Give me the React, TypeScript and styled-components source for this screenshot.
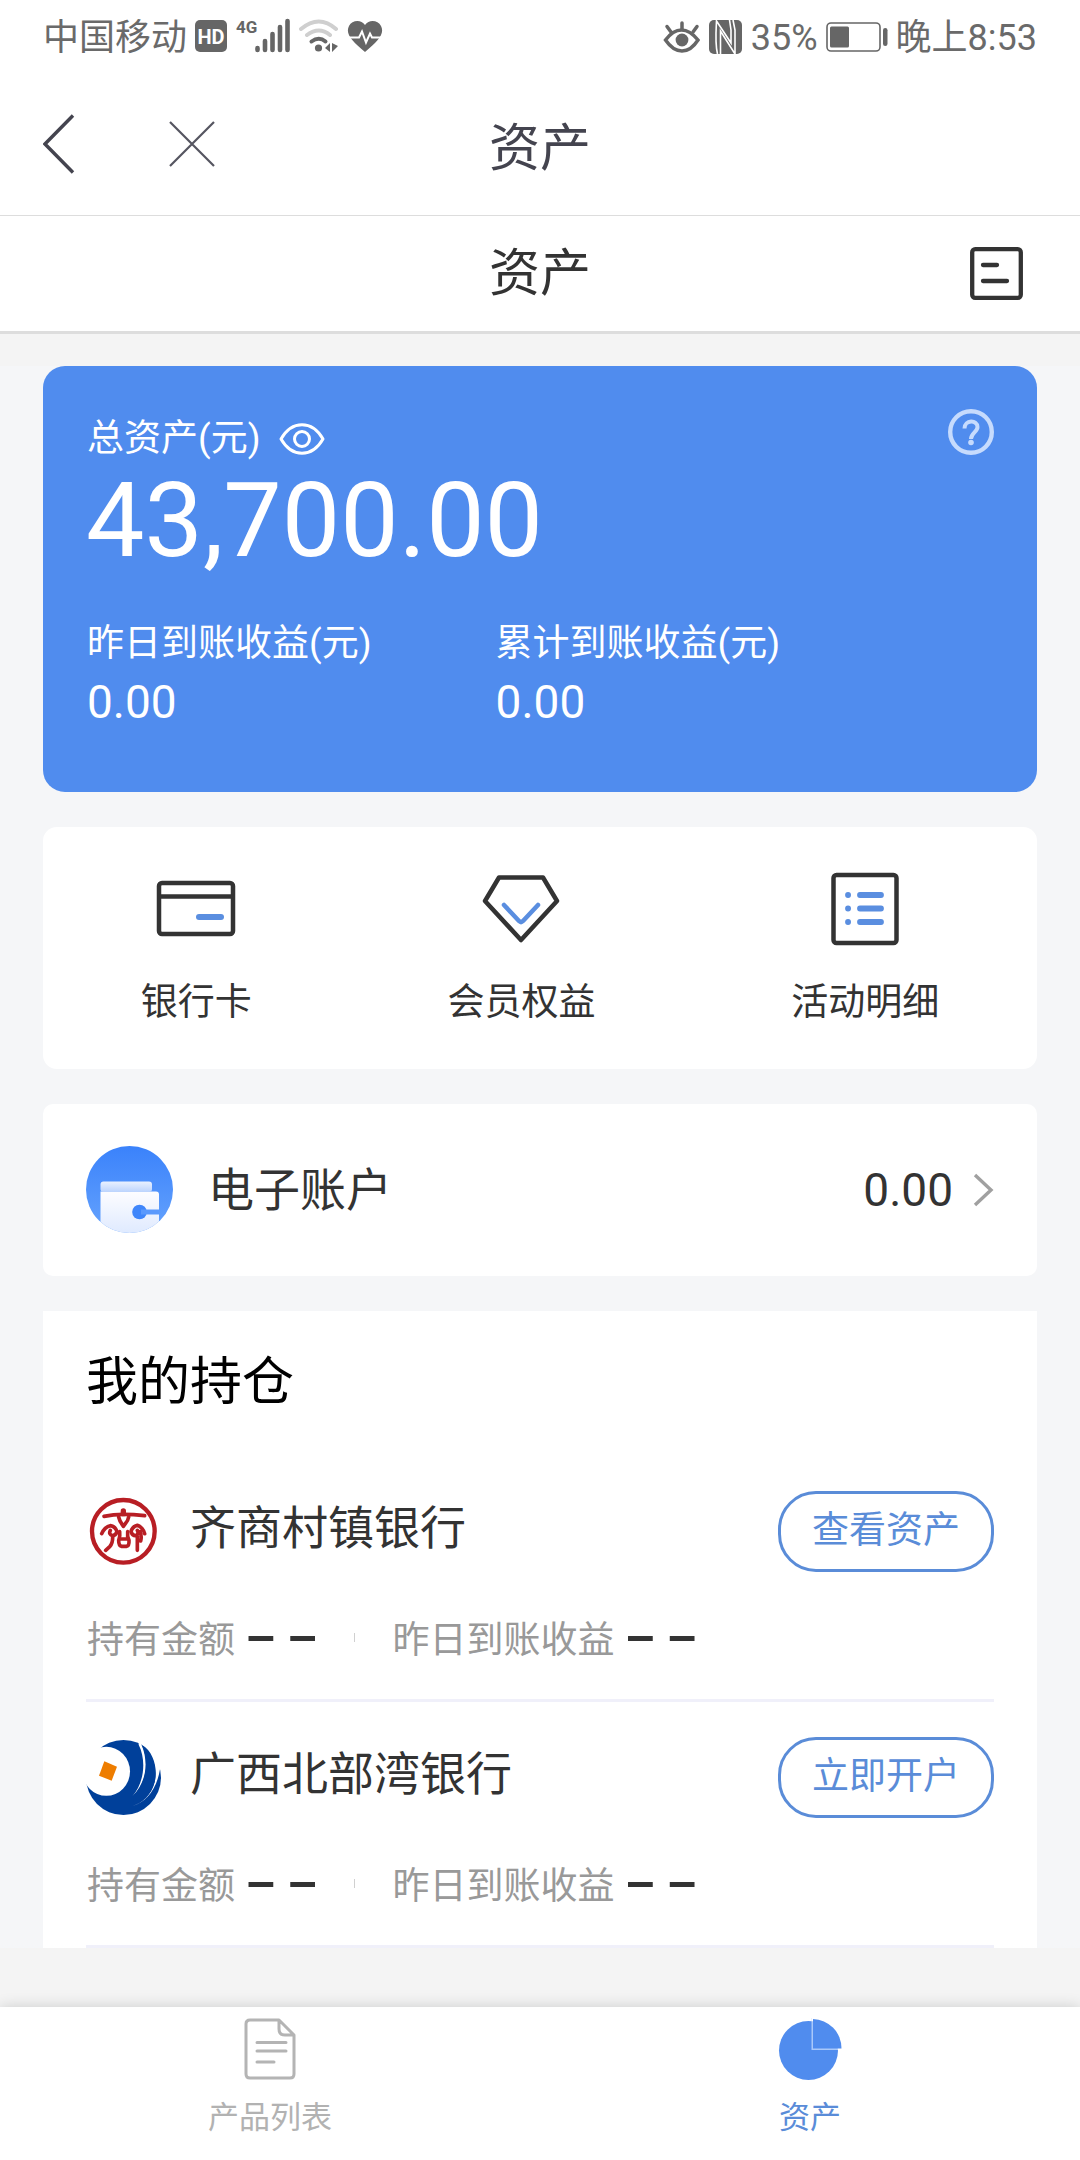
import React from "react";
import styled, { createGlobalStyle } from "styled-components";

const BLUE = "#508cee";
const LINK = "#5a8cd8";
const INK = "#333333";
const LATIN_FIRST = `Roboto, "Noto Sans CJK SC", sans-serif`;
const HAN_FIRST = `"Noto Sans CJK SC", Roboto, sans-serif`;

const GlobalStyle = createGlobalStyle`
  *, *::before, *::after { box-sizing: border-box; }
  body { margin: 0; background: #f4f4f4; }
  h1, h2, h3, p, dl, dd, ul { margin: 0; padding: 0; font-weight: 400; }
  ul { list-style: none; }
  button { padding: 0; border: 0; background: none; font: inherit; color: inherit; cursor: pointer; }
  svg { display: block; flex: none; }
`;

const Page = styled.div`
  display: flex;
  flex-direction: column;
  min-height: 100vh;
  background: #f4f4f4;
  color: ${INK};
  font-family: ${LATIN_FIRST};
  font-size: 37px;
  line-height: 54px;
`;

const StatusBar = styled.div`
  display: flex;
  align-items: center;
  justify-content: space-between;
  min-height: 72px;
  padding: 3px 43px 0;
  background: #fff;
  color: #6a6a6a;
  font-size: 36px;
`;

const StatusGroup = styled.div`
  display: flex;
  align-items: center;
  gap: 8px;
`;

const NavBar = styled.header`
  display: grid;
  grid-template-columns: 1fr auto 1fr;
  align-items: center;
  min-height: 144px;
  padding: 0 43px;
  border-bottom: 1px solid #dddddd;
  background: #fff;
`;

const NavActions = styled.div`
  display: flex;
  align-items: center;
  gap: 94px;
`;

const NavTitle = styled.h1`
  color: #44444f;
  font-family: ${HAN_FIRST};
  font-size: 51px;
  line-height: 72px;
`;

const TitleBar = styled(NavBar)`
  min-height: 118px;
  padding: 0 57px;
  border-bottom: 3px solid #dddddd;
`;

const PageTitle = styled.h2`
  grid-column: 2;
  font-size: 51px;
  line-height: 72px;
`;

const TitleAction = styled.button`
  justify-self: end;
`;

const Content = styled.main`
  display: flex;
  flex-direction: column;
  gap: 35px;
  margin: 32px 0 59px;
  padding: 0 43px;
  background: #f5f6f8;
`;

const AssetCard = styled.section`
  padding: 43px 43px 58px;
  border-radius: 22px;
  background: ${BLUE};
  color: #fff;
`;

const AssetHeader = styled.div`
  display: flex;
  align-items: flex-start;
  justify-content: space-between;
`;

const AssetLabel = styled.div`
  display: flex;
  align-items: center;
  gap: 18px;
  padding: 3px 0 0 1px;
`;

const Total = styled.p`
  font-size: 104px;
  line-height: 110px;
`;

const Earnings = styled.dl`
  display: grid;
  grid-template-columns: 9fr 11fr;
  margin-top: 41px;
`;

const EarningLabel = styled.dt`
  padding-left: 1px;
`;

const EarningValue = styled.dd`
  padding-left: 1px;
  font-size: 46px;
  line-height: 63px;
`;

const Shortcuts = styled.nav`
  display: flex;
  justify-content: space-around;
  padding: 42px 0 39px;
  border-radius: 14px;
  background: #fff;
`;

const Shortcut = styled.button`
  display: flex;
  flex-direction: column;
  align-items: center;
  gap: 27px;
`;

const AccountCard = styled.button`
  display: flex;
  align-items: center;
  padding: 42px 43px 43px;
  border-radius: 10px;
  background: #fff;
  text-align: left;
`;

const AccountName = styled.span`
  flex: 1;
  margin-left: 35px;
  font-size: 46px;
`;

const AccountValue = styled.span`
  margin-right: 20px;
  font-size: 46px;
`;

const Holdings = styled.section`
  padding: 37px 43px 0;
  background: #fff;
`;

const HoldingsTitle = styled.h2`
  margin-bottom: 38px;
  color: #000;
  font-size: 52px;
  line-height: 70px;
`;

const Holding = styled.li`
  padding: 35px 0 31px;
  border-bottom: 3px solid #f0f0fa;
`;

const HoldingHeader = styled.div`
  display: flex;
  align-items: center;
`;

const BankName = styled.h3`
  flex: 1;
  margin-left: 29px;
  padding-bottom: 8px;
  font-size: 46px;
  line-height: 64px;
`;

const PillButton = styled.button`
  padding: 10px 31px 11px;
  border: 3px solid ${LINK};
  border-radius: 38px;
  color: ${LINK};
  min-width: 216px;
`;

const Stats = styled.dl`
  display: flex;
  align-items: center;
  margin-top: 42px;
`;

const Stat = styled.div`
  display: flex;
  align-items: center;
  gap: 12px;
`;

const StatLabel = styled.dt`
  padding-left: 1px;
  color: #999;
`;

const StatValue = styled.dd`
  padding-bottom: 12px;
  font-family: "Liberation Sans", Arial, sans-serif;
  font-size: 50px;
  font-weight: 700;
  line-height: 42px;
`;

const StatRule = styled.span`
  width: 1px;
  height: 9px;
  margin: 0 37px 8px;
  background: #d0d0d0;
`;

const TabBar = styled.nav`
  display: grid;
  grid-template-columns: 1fr 1fr;
  margin-top: auto;
  background: #fff;
  box-shadow: 0 0 14px rgba(0, 0, 0, 0.16);
`;

const Tab = styled.button<{ $active?: boolean }>`
  display: flex;
  flex-direction: column;
  align-items: center;
  gap: 15px;
  padding: 10px 0 20px;
  color: ${(p) => (p.$active ? LINK : "#b2b2b2")};
  font-size: 31px;
  line-height: 44px;
`;

const HdIcon = () => (
  <svg width="32" height="40" viewBox="0 0 32 40">
    <rect x="0" y="2" width="32" height="32" rx="5" fill="#666" />
    <text x="16" y="26" textAnchor="middle" fontFamily="Roboto, sans-serif" fontWeight="700" fontSize="20" fill="#fff">HD</text>
  </svg>
);

const SignalIcon = () => (
  <svg width="56" height="40" viewBox="0 0 56 40" stroke="#666" strokeWidth="4.6" strokeLinecap="round">
    <text x="1" y="15" fontFamily="Roboto, sans-serif" fontWeight="700" fontSize="17" fill="#666" stroke="none">4G</text>
    <path d="M22.500 30v2M30 23v9M37.500 16v16M45 9v23M52.500 3v29" />
  </svg>
);

const WifiIcon = () => (
  <svg width="40" height="40" viewBox="0 0 40 40" fill="none" strokeWidth="4" strokeLinecap="round">
    <path d="M2 11Q20 -4 37 11M8 17Q20 8 31 17" stroke="#cfcfcf" />
    <path d="M12.500 23.500Q20 18 26.500 23.500" stroke="#666" />
    <circle cx="19.500" cy="30" r="3.600" fill="#666" />
    <path d="M31 25v9l-5-4zM33 25v9l6-6z" fill="#666" />
  </svg>
);

const HeartIcon = () => (
  <svg width="36" height="40" viewBox="0 0 36 40">
    <path d="M18 7C14 1 5 2 2 8c-4 8 3 15 16 26C31 23 38 16 34 8 31 2 22 1 18 7z" fill="#666" />
    <path d="M0 19.500h12l3-6 4 11 4-9 2 4h11" fill="none" stroke="#fff" strokeWidth="2" />
  </svg>
);

const LashEyeIcon = () => (
  <svg width="38" height="40" viewBox="0 0 38 40" fill="none" stroke="#666" strokeWidth="3.500" strokeLinecap="round">
    <path d="M2.500 22Q10 12 18.500 12T35 22Q28 33 19 33T2.500 22z" />
    <path d="M19 11V5M8 14L4 8.500M30 14l4-5.500" />
    <circle cx="19" cy="22" r="6.400" fill="#666" stroke="none" />
  </svg>
);

const NfcIcon = () => (
  <svg width="34" height="40" viewBox="0 0 34 40">
    <rect x="0" y="2" width="33" height="34" rx="5" fill="#666" />
    <path d="M8.500 36C6 26 7 12 7.500 3L22 25V12L20.500 2M11.500 36V13l14.500 23V12L24 2" fill="none" stroke="#fff" strokeWidth="1.600" />
  </svg>
);

const BatteryIcon = () => (
  <svg width="62" height="40" viewBox="0 0 62 40">
    <rect x="1" y="5" width="53" height="28" rx="4" fill="none" stroke="#666" strokeWidth="1.600" />
    <rect x="4" y="8.500" width="19" height="21" rx="1.500" fill="#666" />
    <rect x="57" y="10" width="4.500" height="18" rx="2.200" fill="#666" />
  </svg>
);

const BackIcon = () => (
  <svg width="32" height="60" viewBox="0 0 32 60" fill="none" stroke="#44444f" strokeWidth="3.400">
    <path d="M30 1.500L2 30l28 28.500" />
  </svg>
);

const CloseIcon = () => (
  <svg width="46" height="46" viewBox="0 0 46 46" fill="none" stroke="#555560" strokeWidth="2.200">
    <path d="M1 1l44 44M45 1L1 45" />
  </svg>
);

const NoteIcon = () => (
  <svg width="53" height="53" viewBox="0 0 53 53" fill="none" stroke={INK} strokeWidth="4.300" strokeLinecap="round">
    <rect x="2.200" y="2.200" width="48.600" height="48.600" rx="3" />
    <path d="M13 18h14M13 34h24" />
  </svg>
);

const EyeIcon = () => (
  <svg width="46" height="32" viewBox="0 0 46 32" fill="none" stroke="#fff" strokeWidth="3">
    <path d="M2 16C13 -3 33 -3 44 16 33 35 13 35 2 16z" strokeLinejoin="round" />
    <circle cx="23" cy="16" r="7.500" />
  </svg>
);

const HelpIcon = () => (
  <svg width="46" height="46" viewBox="0 0 46 46" fill="none" stroke="#c6dbfd">
    <circle cx="23" cy="23" r="20.800" strokeWidth="4.400" />
    <path d="M16.500 19.500c0-9 13-9 13-1.500 0 5-6.500 6-6.500 12" strokeWidth="4" />
    <circle cx="23" cy="33.500" r="2.800" fill="#c6dbfd" stroke="none" />
  </svg>
);

const CardIcon = () => (
  <svg width="80" height="80" viewBox="0 0 80 80" fill="none" stroke={INK} strokeWidth="4.500">
    <rect x="3" y="14" width="74" height="51" rx="3" />
    <path d="M3 27.500h74" />
    <path d="M43 48h22" stroke="#5a8ee0" strokeWidth="6" strokeLinecap="round" />
  </svg>
);

const DiamondIcon = () => (
  <svg width="80" height="80" viewBox="0 0 80 80" fill="none" strokeWidth="4.500" strokeLinejoin="round" strokeLinecap="round">
    <path d="M18 8.500h44l14 23.500-36 39L4 32z" stroke={INK} />
    <path d="M23 36l15 16q2 2 4 0l15-16" stroke="#5a8ee0" />
  </svg>
);

const ListIcon = () => (
  <svg width="80" height="80" viewBox="0 0 80 80" fill="none" stroke={INK} strokeWidth="4.500">
    <rect x="8.500" y="6" width="63" height="68" rx="3" />
    <path d="M23 26h.1M23 39.500h.1M23 53h.1M35 26h21M35 39.500h21M35 53h21" stroke="#5a8ee0" strokeWidth="5.800" strokeLinecap="round" />
  </svg>
);

const WalletIcon = () => (
  <svg width="87" height="87" viewBox="0 0 87 87">
    <defs>
      <linearGradient id="walletDisc" x1="0" y1="0" x2="0" y2="1">
        <stop offset="0" stopColor="#3a82fb" />
        <stop offset="1" stopColor="#66a3fd" />
      </linearGradient>
      <linearGradient id="walletFlap" x1="0" y1="0" x2="0" y2="1">
        <stop offset="0" stopColor="#eaf1ff" />
        <stop offset="1" stopColor="#bcd4fd" />
      </linearGradient>
      <linearGradient id="walletBody" x1="0" y1="0" x2="0" y2="1">
        <stop offset="0" stopColor="#fdfdff" />
        <stop offset="1" stopColor="#dfeaff" />
      </linearGradient>
      <clipPath id="walletClip"><circle cx="43.500" cy="43.500" r="43.500" /></clipPath>
    </defs>
    <g clipPath="url(#walletClip)">
      <rect width="87" height="87" fill="url(#walletDisc)" />
      <path d="M14.500 45.500H70q3 0 3 3V87H14.500z" fill="url(#walletBody)" />
      <rect x="14.500" y="35.500" width="51.500" height="10.500" rx="3" fill="url(#walletFlap)" />
      <circle cx="53.500" cy="66" r="7.300" fill="#3f86fb" />
      <path d="M55 66h18.500" stroke="#5a99fd" strokeWidth="5" />
    </g>
  </svg>
);

const ChevronIcon = () => (
  <svg width="21" height="34" viewBox="0 0 21 34" fill="none" stroke="#a0a0a0" strokeWidth="3.400">
    <path d="M2 2l16 15L2 32" />
  </svg>
);

const QishangLogo = () => (
  <svg width="75" height="75" viewBox="30 15 225 225" fill="none" stroke="#b81e24" strokeLinejoin="round" strokeLinecap="round">
    <circle cx="142" cy="127" r="94" strokeWidth="13" />
    <g strokeWidth="11">
      <path d="M84 82Q112 76 142 76T206 80" />
      <path d="M142 66v8" strokeWidth="16" />
      <path d="M128 84q3 12 9 20l5 8 6-8q8-8 10-20" />
      <path d="M77 134q9-20 26-24 15 2 20 18-4 12-14 12-12-4-6-16M110 140q1 22-8 32l-13 12" />
      <path d="M206 134q-6-20-22-25-15 3-19 19 4 12 13 12 12-4 6-16M184 142v42M192 128q6 14 2 28" />
      <path d="M131 128q2 14-3 26 0 16 8 18h16q8-2 7-18-6-12-4-26M129 150h28" />
    </g>
  </svg>
);

const BeibuLogo = () => (
  <svg width="75" height="75" viewBox="30 750 225 225">
    <circle cx="142.500" cy="862.500" r="112.500" fill="#00409a" />
    <ellipse cx="91" cy="844" rx="71" ry="73.500" fill="#fff" />
    <path d="M20 780L53 797 40 860 29 850z" fill="#fff" />
    <path d="M188 752L197 766C218 815 212 876 170 918 204 878 212 812 188 764z" fill="#fff" />
    <path d="M197 764C232 790 244 838 236 876 226 916 200 938 170 948 208 938 242 900 252 838L270 760 215 740z" fill="#fff" />
    <path d="M198 765C234 786 246 838 236 876 228 905 210 925 180 940 170 945 172 920 172 916 212 880 220 815 198 765z" fill="#00409a" />
    <path d="M85 814l38 16-16 42-38-15z" fill="#ee7d00" />
  </svg>
);

const DocumentIcon = () => (
  <svg width="64" height="64" viewBox="0 0 64 64" fill="none" stroke="#b4b4b4" strokeWidth="3" strokeLinecap="round" strokeLinejoin="round">
    <path d="M41 3H12q-4 0-4 4v50q0 4 4 4h40q4 0 4-4V18zM41 3v9q0 6 6 6h9" />
    <path d="M19 25.500h29M19 34h29M19 45h17" />
  </svg>
);

const PieIcon = () => (
  <svg width="64" height="64" viewBox="0 0 64 64">
    <circle cx="30.500" cy="33.500" r="29.500" fill={BLUE} />
    <path d="M33.500 1H64v32H33.500z" fill="#a9c8fa" />
    <path d="M33.500 0H64v34H60A30 30 0 0 0 33.500 4z" fill="#fff" />
    <path d="M35 2a29 29.500 0 0 1 28.500 29.500H35z" fill={BLUE} />
  </svg>
);

const shortcuts = [
  { label: "银行卡", Icon: CardIcon },
  { label: "会员权益", Icon: DiamondIcon },
  { label: "活动明细", Icon: ListIcon },
];

const earnings = [
  { label: "昨日到账收益(元)", value: "0.00" },
  { label: "累计到账收益(元)", value: "0.00" },
];

const banks = [
  { name: "齐商村镇银行", action: "查看资产", Logo: QishangLogo },
  { name: "广西北部湾银行", action: "立即开户", Logo: BeibuLogo },
];

export default function App() {
  return (
    <Page>
      <GlobalStyle />
      <StatusBar>
        <StatusGroup>
          <span>中国移动</span>
          <HdIcon />
          <SignalIcon />
          <WifiIcon />
          <HeartIcon />
        </StatusGroup>
        <StatusGroup>
          <LashEyeIcon />
          <NfcIcon />
          <span>35%</span>
          <BatteryIcon />
          <span>晚上8:53</span>
        </StatusGroup>
      </StatusBar>

      <NavBar>
        <NavActions>
          <button type="button" aria-label="返回"><BackIcon /></button>
          <button type="button" aria-label="关闭"><CloseIcon /></button>
        </NavActions>
        <NavTitle>资产</NavTitle>
      </NavBar>

      <TitleBar as="div">
        <PageTitle>资产</PageTitle>
        <TitleAction type="button" aria-label="明细"><NoteIcon /></TitleAction>
      </TitleBar>

      <Content>
        <AssetCard>
          <AssetHeader>
            <AssetLabel>
              <span>总资产(元)</span>
              <button type="button" aria-label="显示金额"><EyeIcon /></button>
            </AssetLabel>
            <button type="button" aria-label="帮助"><HelpIcon /></button>
          </AssetHeader>
          <Total>43,700.00</Total>
          <Earnings>
            {earnings.map((e) => (
              <div key={e.label}>
                <EarningLabel>{e.label}</EarningLabel>
                <EarningValue>{e.value}</EarningValue>
              </div>
            ))}
          </Earnings>
        </AssetCard>

        <Shortcuts>
          {shortcuts.map(({ label, Icon }) => (
            <Shortcut type="button" key={label}>
              <Icon />
              <span>{label}</span>
            </Shortcut>
          ))}
        </Shortcuts>

        <AccountCard type="button">
          <WalletIcon />
          <AccountName>电子账户</AccountName>
          <AccountValue>0.00</AccountValue>
          <ChevronIcon />
        </AccountCard>

        <Holdings>
          <HoldingsTitle>我的持仓</HoldingsTitle>
          <ul>
            {banks.map(({ name, action, Logo }) => (
              <Holding key={name}>
                <HoldingHeader>
                  <Logo />
                  <BankName>{name}</BankName>
                  <PillButton type="button">{action}</PillButton>
                </HoldingHeader>
                <Stats>
                  <Stat>
                    <StatLabel>持有金额</StatLabel>
                    <StatValue>– –</StatValue>
                  </Stat>
                  <StatRule />
                  <Stat>
                    <StatLabel>昨日到账收益</StatLabel>
                    <StatValue>– –</StatValue>
                  </Stat>
                </Stats>
              </Holding>
            ))}
          </ul>
        </Holdings>
      </Content>

      <TabBar>
        <Tab type="button">
          <DocumentIcon />
          <span>产品列表</span>
        </Tab>
        <Tab type="button" $active>
          <PieIcon />
          <span>资产</span>
        </Tab>
      </TabBar>
    </Page>
  );
}
